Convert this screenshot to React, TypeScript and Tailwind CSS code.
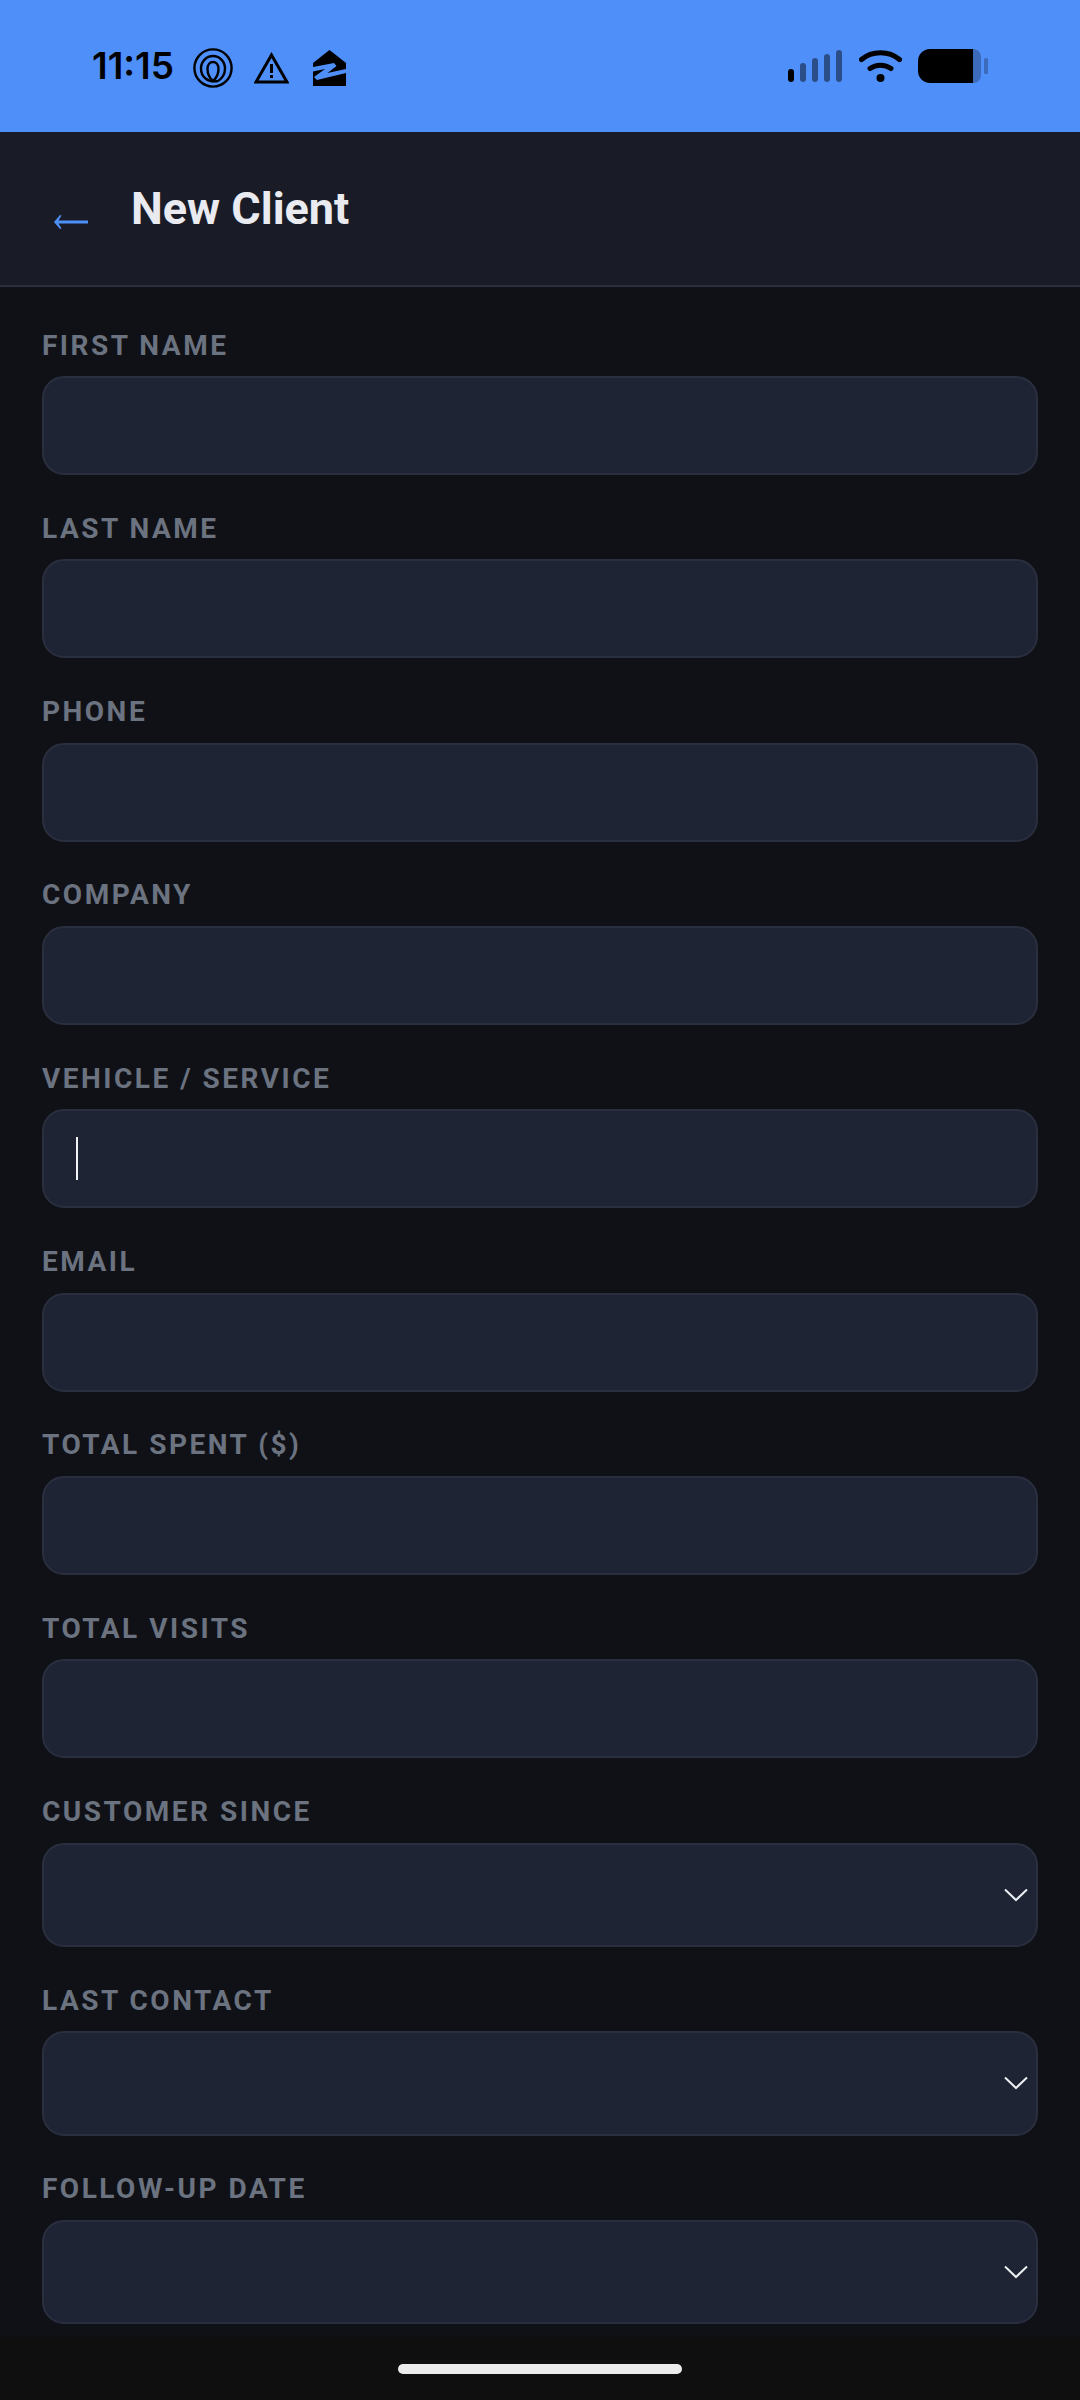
const inputFields = [
  { label: "FIRST NAME" },
  { label: "LAST NAME" },
  { label: "PHONE" },
  { label: "COMPANY" },
  { label: "VEHICLE / SERVICE", focused: true },
  { label: "EMAIL" },
  { label: "TOTAL SPENT ($)" },
  { label: "TOTAL VISITS" },
];

const dateFields = ["CUSTOMER SINCE", "LAST CONTACT", "FOLLOW-UP DATE"];

function Life360Icon() {
  return (
    <svg width="40" height="40" viewBox="0 0 40 40" fill="none" stroke="#000" strokeWidth="2.4">
      <circle cx="20" cy="20" r="18.6" />
      <path d="M25 33C29 30.500 32 26 32 20.500C32 13.500 26.500 8 20 8C13.500 8 8 13.500 8 20.500C8 28.500 14.500 35 25 33" />
      <path d="M20 33C16.500 30 14.500 25.500 14.500 21C14.500 16.500 17 14 20 14C23 14 25.500 16.500 25.500 21C25.500 25.500 23.500 30 20 33Z" />
    </svg>
  );
}

function AlertIcon() {
  return (
    <svg width="35" height="32" viewBox="0 0 35 32" fill="none">
      <path d="M17.500 3L33 30H2L17.500 3Z" stroke="#000" strokeWidth="3" />
      <rect x="16" y="12" width="3" height="9" fill="#000" />
      <rect x="16" y="23" width="3" height="3" fill="#000" />
    </svg>
  );
}

function ZillowIcon() {
  return (
    <svg width="33" height="36" viewBox="0 0 33 36">
      <path d="M16.500 0L33 13V36H0V13L16.500 0Z" fill="#000" />
      <path d="M0 17L21 13L23.500 16L14.500 23L33 19V23L4 30L1 27L12 19L0 21.500Z" fill="#4f8ff9" />
    </svg>
  );
}

function SignalIcon() {
  return (
    <svg width="55" height="32" viewBox="0 0 55 32">
      <rect x="0" y="19" width="6" height="13" rx="3" fill="#000" />
      <rect x="12" y="13" width="6" height="19" rx="3" fill="#000" opacity="0.45" />
      <rect x="24" y="8" width="6" height="24" rx="3" fill="#000" opacity="0.45" />
      <rect x="36" y="4" width="6" height="28" rx="3" fill="#000" opacity="0.45" />
      <rect x="48" y="0" width="6" height="32" rx="3" fill="#000" opacity="0.45" />
    </svg>
  );
}

function WifiIcon() {
  return (
    <svg width="43" height="32" viewBox="0 0 43 32" fill="none" stroke="#000" strokeWidth="5" strokeLinecap="round">
      <path d="M2.500 9.500C13 0.500 30 0.500 40.500 9.500" />
      <path d="M11 18.500C17 14 26 14 32 18.500" />
      <circle cx="21.500" cy="28" r="4" fill="#000" stroke="none" />
    </svg>
  );
}

function BatteryIcon() {
  return (
    <svg width="70" height="34" viewBox="0 0 70 34">
      <path d="M55 0C59.500 0 63 3.500 63 8V26C63 30.500 59.500 34 55 34V0Z" fill="#000" opacity="0.25" />
      <path d="M12 0H55V34H12C5.400 34 0 28.600 0 22V12C0 5.400 5.400 0 12 0Z" fill="#000" />
      <rect x="66" y="9" width="4" height="16" rx="1.500" fill="#000" opacity="0.25" />
    </svg>
  );
}

function StatusBar() {
  return (
    <div className="flex h-[132px] items-center justify-between bg-[#4f8ff9] pl-[92px] pr-[92px]">
      <div className="flex items-center">
        <span className="mb-[1px] font-['Inter',sans-serif] text-[37px] font-semibold leading-none text-black">11:15</span>
        <div className="ml-[19px] mt-[3px] flex items-center gap-[21px]">
          <Life360Icon />
          <AlertIcon />
          <div className="ml-[3px]">
            <ZillowIcon />
          </div>
        </div>
      </div>
      <div className="flex items-center gap-[16px]">
        <SignalIcon />
        <WifiIcon />
        <BatteryIcon />
      </div>
    </div>
  );
}

function Header() {
  return (
    <div className="flex h-[155px] items-center border-b-2 border-[#2a2f3f] bg-[#191c27] pb-[1px] pl-[53px]">
      <svg className="mt-[27px]" width="36" height="16" viewBox="0 0 36 16" fill="#4f8ff9">
        <path d="M1 8L7 1L8.500 1.500L5.500 6.500H35V9.500H5.500L8.500 14.500L7 15Z" />
      </svg>
      <h1 className="ml-[42px] font-['Roboto',sans-serif] text-[45px] font-bold leading-none text-[#e9ebf0]">New Client</h1>
    </div>
  );
}

function Label({ text }: { text: string }) {
  return (
    <label className="mb-[14.5px] block font-['Roboto',sans-serif] text-[28px] font-bold leading-[33px] tracking-[2.5px] text-[#6b7280]">
      {text}
    </label>
  );
}

export default function App() {
  return (
    <div className="flex h-[2400px] w-[1080px] flex-col overflow-hidden bg-[#101116]">
      <StatusBar />
      <Header />
      <div className="flex flex-1 flex-col gap-[36.83px] px-[42px] pt-[41.5px]">
        {inputFields.map((field) => (
          <div key={field.label}>
            <Label text={field.label} />
            <div className="flex h-[99px] items-center rounded-[22px] border-2 border-[#2a2f3f] bg-[#1e2433] pl-[32px]">
              {field.focused && <div className="h-[43px] w-[2px] bg-[#f1f2f5]" />}
            </div>
          </div>
        ))}
        {dateFields.map((label) => (
          <div key={label}>
            <Label text={label} />
            <div className="flex h-[104.33px] items-center justify-end rounded-[22px] border-2 border-[#2a2f3f] bg-[#1e2433] pr-[8px]">
              <svg width="24" height="14" viewBox="0 0 24 14" fill="none" stroke="#eceef2" strokeWidth="2">
                <path d="M1 1.500L12 12L23 1.500" />
              </svg>
            </div>
          </div>
        ))}
      </div>
      <div className="flex h-[63px] items-start justify-center bg-[#0f0f0f] pt-[27px]">
        <div className="h-[10px] w-[284px] rounded-full bg-[#ececec]" />
      </div>
    </div>
  );
}
